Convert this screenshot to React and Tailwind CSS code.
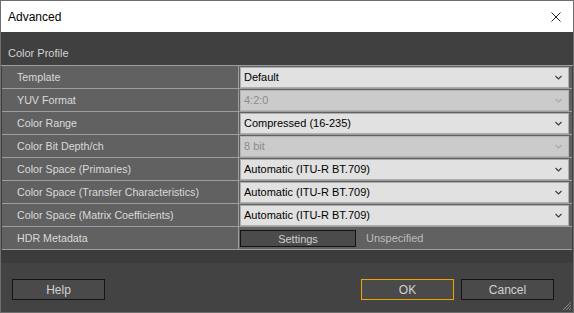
import React from 'react';

const rows = [
  { label: 'Template', value: 'Default' },
  { label: 'YUV Format', value: '4:2:0', disabled: true },
  { label: 'Color Range', value: 'Compressed (16-235)' },
  { label: 'Color Bit Depth/ch', value: '8 bit', disabled: true },
  { label: 'Color Space (Primaries)', value: 'Automatic (ITU-R BT.709)' },
  { label: 'Color Space (Transfer Characteristics)', value: 'Automatic (ITU-R BT.709)' },
  { label: 'Color Space (Matrix Coefficients)', value: 'Automatic (ITU-R BT.709)' },
];

const Chevron = ({ disabled }) => (
  <svg width="9" height="6" viewBox="0 0 9 6" className="shrink-0">
    <path d="M1.5 1 L4.5 4 L7.5 1" fill="none" stroke={disabled ? '#a9a9a9' : '#3a3a3a'} strokeWidth="1.1" />
  </svg>
);

const Select = ({ value, disabled }) => (
  <div
    className={`h-[21px] mt-[1px] flex items-center justify-between pl-[3px] pr-[5px] border text-[11px] ${
      disabled ? 'bg-[#cbcbcb] border-[#b4b4b4] text-[#8c8c8c]' : 'bg-[#e1e1e1] border-[#adadad] text-black'
    }`}
  >
    <span>{value}</span>
    <Chevron disabled={disabled} />
  </div>
);

const Button = ({ children, primary }) => (
  <button
    className={`w-[93px] h-[21px] bg-[#4a4a4a] border text-[#d2d2d2] text-[12px] ${
      primary ? 'border-[#f0a400]' : 'border-[#141414]'
    }`}
  >
    {children}
  </button>
);

export default function App() {
  return (
    <div
      className="w-[574px] h-[313px] border border-[#6e6e6e] bg-[#404040] flex flex-col relative overflow-hidden"
      style={{ fontFamily: '"Liberation Sans", Arial, sans-serif' }}
    >
      {/* Title bar */}
      <div className="h-[31px] bg-white flex items-center justify-between pl-[7px] pr-[12px] shrink-0">
        <span className="text-[12px] text-black">Advanced</span>
        <svg width="10" height="10" viewBox="0 0 10 10">
          <path d="M0.5 0.5 L9.5 9.5 M9.5 0.5 L0.5 9.5" stroke="#222" strokeWidth="1" />
        </svg>
      </div>

      {/* Section header */}
      <div className="h-[33px] flex items-center pl-[7px] pt-[9px] text-[11px] text-[#d2d2d2] shrink-0">
        Color Profile
      </div>

      {/* Property table */}
      <div className="border-t border-[#9d9d9d] text-[10.7px] shrink-0">
        {rows.map((r) => (
          <div key={r.label} className="flex h-[23px] border-b border-[#9d9d9d] mx-[1px] bg-[#616161]">
            <div className="w-[237px] border-r border-[#9d9d9d] flex items-center pl-[15px] text-[#dadada]">
              {r.label}
            </div>
            <div className="flex-1 pl-[1px] pr-[3px]">
              <Select value={r.value} disabled={r.disabled} />
            </div>
          </div>
        ))}
        <div className="flex h-[23px] border-b border-[#9d9d9d] mx-[1px] bg-[#616161]">
          <div className="w-[237px] border-r border-[#9d9d9d] flex items-center pl-[15px] text-[#dadada]">
            HDR Metadata
          </div>
          <div className="flex-1 flex items-center gap-[10px] pl-[1px]">
            <button className="w-[116px] h-[17px] bg-[#4b4b4b] border border-[#121212] text-[#cfcfcf] text-[11px]">
              Settings
            </button>
            <span className="text-[#bdbdbd] text-[11px]">Unspecified</span>
          </div>
        </div>
      </div>

      <div className="h-[13px] bg-[#3c3c3c] shrink-0" />

      {/* Footer */}
      <div className="flex-1 bg-[#434343] flex items-start justify-between pt-[16px] pl-[11px] pr-[19px]">
        <Button>Help</Button>
        <div className="flex gap-[7px]">
          <Button primary>OK</Button>
          <Button>Cancel</Button>
        </div>
      </div>

      {/* Resize grip */}
      <svg width="10" height="10" viewBox="0 0 10 10" className="absolute right-[1px] bottom-[1px]">
        <path d="M9 1 L1 9 M9 4 L4 9 M9 7 L7 9" stroke="#8a8a8a" strokeWidth="1" />
      </svg>
    </div>
  );
}
